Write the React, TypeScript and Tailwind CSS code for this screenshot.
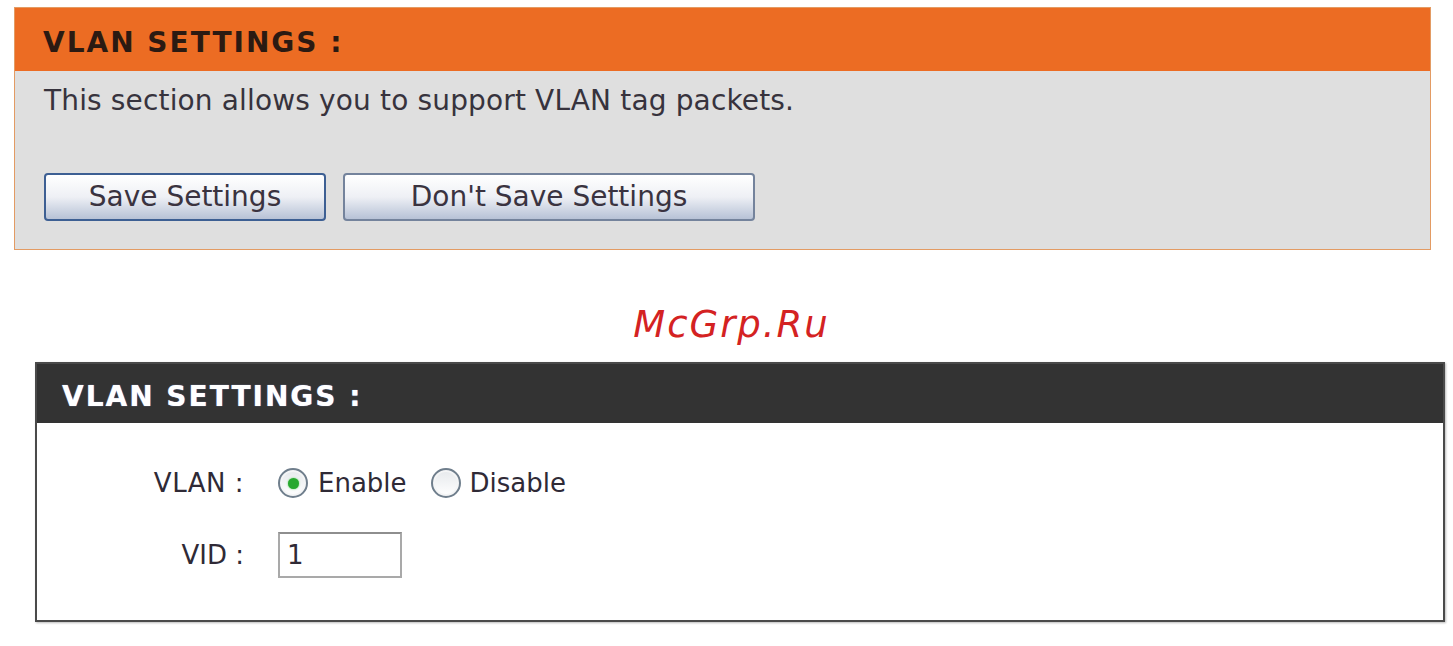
import React from "react";

const sans = { fontFamily: '"DejaVu Sans", Verdana, sans-serif' };

function Radio({ checked }: { checked?: boolean }) {
  return (
    <span className="flex h-[30px] w-[30px] items-center justify-center rounded-full border-2 border-[#6f7e8c] bg-gradient-to-b from-[#e6e9ec] to-[#ffffff] shadow-[inset_0_0_0_2px_#f4f5f6]">
      {checked && <span className="h-[11px] w-[11px] rounded-full bg-[#27a82e] shadow-[0_0_2px_#5fd05f]" />}
    </span>
  );
}

function PanelButton({ label, width, dark }: { label: string; width: string; dark?: boolean }) {
  return (
    <button
      type="button"
      className={`${width} flex h-[48px] items-center justify-center rounded-[4px] border-2 bg-gradient-to-b from-[#ffffff] via-[#eef0f5] to-[#b7c2d6] text-[28px] text-[#3a3340] ${
        dark ? "border-[#3d5f93]" : "border-[#74839c]"
      }`}
      style={sans}
    >
      {label}
    </button>
  );
}

export default function App() {
  return (
    <div className="min-h-screen w-[1453px] bg-white pt-[7px]" style={sans}>
      {/* Orange panel */}
      <div className="ml-[14px] w-[1417px] border border-[#e39b63]">
        <div className="flex h-[63px] items-center bg-[#ec6c23] pl-[28px] pt-[6px]">
          <h2 className="text-[28px] font-bold tracking-[2px] text-[#2b1a12]">VLAN SETTINGS :</h2>
        </div>
        <div className="h-[178px] bg-[#dfdfdf] pl-[29px] pt-[14px]">
          <p className="text-[28px] leading-[31px] tracking-[0.15px] text-[#37333d]">
            This section allows you to support VLAN tag packets.
          </p>
          <div className="mt-[57px] flex gap-[17px]">
            <PanelButton label="Save Settings" width="w-[282px]" dark />
            <PanelButton label="Don't Save Settings" width="w-[412px]" />
          </div>
        </div>
      </div>

      {/* Watermark */}
      <div className="flex h-[112px] justify-center pl-[10px] pt-[53px]">
        <span
          className="text-[37px] italic leading-[44px] tracking-[2px] text-[#d42222]"
          style={{ fontFamily: '"DejaVu Sans", sans-serif' }}
        >
          McGrp.Ru
        </span>
      </div>

      {/* Dark panel */}
      <div className="ml-[35px] w-[1410px] border-2 border-[#4a4a4a] shadow-[1px_1px_2px_#bbbbbb]">
        <div className="flex h-[59px] items-center bg-[#333333] pl-[25px] pt-[6px]">
          <h2 className="text-[28px] font-bold tracking-[2px] text-white [text-shadow:0_0_1px_#9fb4ff]">
            VLAN SETTINGS :
          </h2>
        </div>
        <div className="h-[197px] bg-white pt-[37px] text-[26px] text-[#2f2a36]">
          <div className="flex h-[46px] items-center">
            <span className="w-[208px] pr-[1px] text-right tracking-[0.5px]">VLAN :</span>
            <div className="ml-[33px] flex items-center">
              <Radio checked />
              <span className="ml-[10px]">Enable</span>
              <span className="ml-[24px]">
                <Radio />
              </span>
              <span className="ml-[9px]">Disable</span>
            </div>
          </div>
          <div className="mt-[26px] flex h-[46px] items-center">
            <span className="w-[208px] pr-[1px] text-right">VID :</span>
            <div className="ml-[33px] flex h-[46px] w-[124px] items-center border-2 border-[#a9a9a9] border-t-[#8e8e8e] pl-[7px]">
              1
            </div>
          </div>
        </div>
      </div>
    </div>
  );
}
